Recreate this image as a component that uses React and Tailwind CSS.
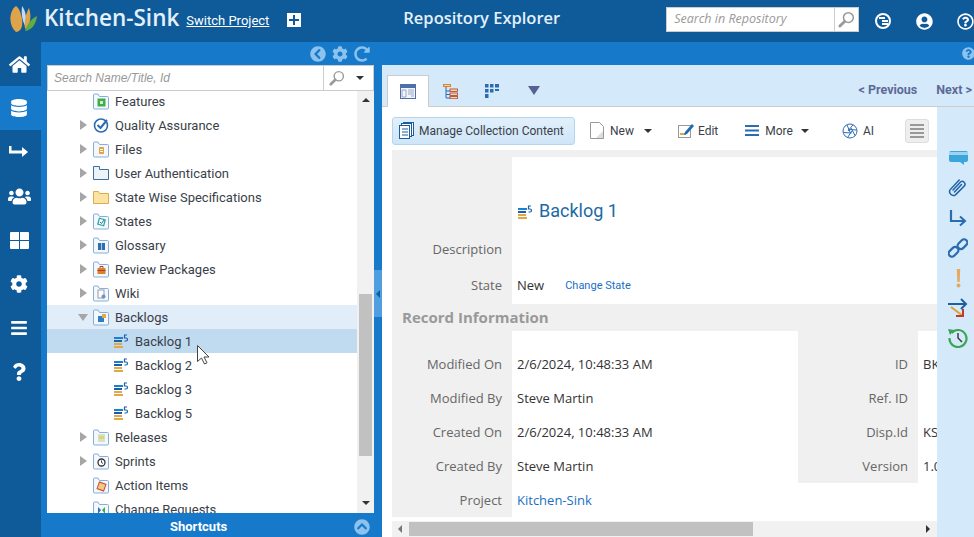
import React from 'react';
import { FaHome, FaDatabase, FaUsers, FaCog, FaBars, FaQuestion, FaChevronCircleLeft, FaRedoAlt, FaQuestionCircle, FaChevronCircleUp, FaUserCircle, FaRegQuestionCircle } from 'react-icons/fa';

const treeBefore = [
  { label: 'Features', noArrow: true, inner: <><rect x="4.5" y="5.5" width="8" height="8" fill="#3fae4a" /><rect x="7" y="8" width="3" height="3" fill="#cfeccf" /></> },
  { label: 'Quality Assurance', check: true },
  { label: 'Files', inner: <><rect x="6" y="6" width="5" height="7" rx="1" fill="#e2a33f" /><path d="M7 8.5h3M7 10.5h3" stroke="#fff" /></> },
  { label: 'User Authentication', plain: true },
  { label: 'State Wise Specifications', yellow: true },
  { label: 'States', inner: <><rect x="5.5" y="6" width="6" height="6" fill="#fff" stroke="#2aa7a0" strokeWidth="1.3" transform="rotate(15 8.5 9)" /><path d="M7 9l1.5 1.5L11 7" stroke="#2b6cb0" fill="none" /></> },
  { label: 'Glossary', inner: <><rect x="5" y="6" width="7" height="7" fill="#2f6fb0" /><path d="M8.5 6v7" stroke="#a9c7e6" /></> },
  { label: 'Review Packages', inner: <><rect x="4.5" y="7" width="8" height="6" fill="#d9822b" /><rect x="4.5" y="9" width="8" height="1" fill="#b03a2e" /><path d="M7 7V5.5h3V7" stroke="#b03a2e" fill="none" /></> },
  { label: 'Wiki', inner: <><rect x="5" y="5" width="6" height="8" fill="#fff" stroke="#99a" /><circle cx="10.5" cy="11.5" r="2" fill="#6c93c9" /></> },
];

const treeAfter = [
  { label: 'Releases', inner: <><rect x="5" y="5" width="7" height="8" fill="#cfe6c4" /><rect x="6" y="7" width="5" height="3" fill="#e7cf82" /></> },
  { label: 'Sprints', inner: <><circle cx="8.5" cy="9.5" r="3.5" fill="#fff" stroke="#333" strokeWidth="1.3" /><path d="M8.5 7.5v2l1.5 1" stroke="#333" fill="none" /></> },
  { label: 'Action Items', noArrow: true, inner: <rect x="5" y="6" width="7" height="7" fill="#f3c98b" stroke="#c9502a" transform="rotate(20 8.5 9.5)" /> },
  { label: 'Change Requests', noArrow: true, inner: <><path d="M5 6l3 3-3 4z" fill="#2f6fb0" /><path d="M12 6l-3 3 3 4z" fill="#3fae4a" /></> },
];

const backlogs = ['Backlog 1', 'Backlog 2', 'Backlog 3', 'Backlog 5'];

function FolderIcon({ children }) {
  return (
    <svg width="16" height="17" viewBox="0 0 16 17" className="shrink-0">
      <path d="M.5 15V2a1 1 0 0 1 1-1h3.5l1.5 2.5H14.500a1 1 0 0 1 1 1V15a1 1 0 0 1-1 1h-13a1 1 0 0 1-1-1z" fill="#f4f8fc" stroke="#86aedb" />
      {children}
    </svg>
  );
}

function BacklogIcon() {
  return (
    <svg width="15" height="14" viewBox="0 0 15 14" className="shrink-0">
      <rect x="0" y="3" width="9" height="2" fill="#1b7fd4" />
      <rect x="0" y="6" width="8" height="2" fill="#1b5fa8" />
      <rect x="0" y="9" width="8" height="2" fill="#e0a848" />
      <rect x="0" y="12" width="9" height="2" fill="#e0a848" />
      <path d="M10 1h3M10.500 1v3h1.500a1.400 1.400 0 0 1 0 3h-1.500" fill="none" stroke="#1b5fa8" strokeWidth="1.2" />
    </svg>
  );
}

function Arrow({ open }) {
  if (open) {
    return <svg width="10" height="7" viewBox="0 0 10 7" className="shrink-0"><path d="M0 0h10L5 7z" fill="#a6a6a6" /></svg>;
  }
  return <svg width="7" height="10" viewBox="0 0 7 10" className="shrink-0"><path d="M0 0l7 5-7 5z" fill="#a6a6a6" /></svg>;
}

function TreeRow({ item }) {
  return (
    <div className="flex h-6 items-center pl-[33px]">
      <div className="flex w-[13px] shrink-0">{!item.noArrow && <Arrow />}</div>
      {item.check ? (
        <svg width="16" height="16" viewBox="0 0 16 16" className="shrink-0">
          <circle cx="8" cy="8.500" r="6.500" fill="none" stroke="#2b6cb0" strokeWidth="1.6" />
          <path d="M4.500 8l3 3L14 3" fill="none" stroke="#2b6cb0" strokeWidth="2" />
        </svg>
      ) : item.plain ? (
        <svg width="16" height="14" viewBox="0 0 16 14" className="shrink-0">
          <path d="M.5 13.500v-13h6v3h9v10z" fill="#eef3f8" stroke="#3b6ea5" />
        </svg>
      ) : item.yellow ? (
        <svg width="16" height="13" viewBox="0 0 16 13" className="shrink-0">
          <path d="M.5 12.500v-12h5l1 2h9v10z" fill="#fbe3a4" stroke="#e0ab4f" />
        </svg>
      ) : (
        <FolderIcon>{item.inner}</FolderIcon>
      )}
      <span className="ml-[6px] pt-[2px] text-[13px] whitespace-nowrap text-[#3a3f4a]">{item.label}</span>
    </div>
  );
}

function SideIcon({ children, active }) {
  return (
    <div className={`flex h-11 items-center justify-center pr-[3px] text-white ${active ? 'bg-[#1679c9]' : ''}`}>
      {children}
    </div>
  );
}

function Magnifier({ size = 18, color = '#9a9a9a' }) {
  return (
    <svg width={size} height={size} viewBox="0 0 18 18">
      <circle cx="11" cy="7" r="5.200" fill="none" stroke={color} strokeWidth="1.6" />
      <path d="M7 11l-5 5" stroke={color} strokeWidth="3" strokeLinecap="round" />
    </svg>
  );
}

function Caret({ className = '' }) {
  return <svg width="8" height="4" viewBox="0 0 8 4" className={className}><path d="M0 0h8L4 4z" fill="#333" /></svg>;
}

function InfoRow({ label, value, label2, value2, link }) {
  return (
    <div className="flex h-[34px] items-center">
      <div className="flex h-full w-[120px] shrink-0 items-center justify-end pt-[1px] pr-[10px] text-[#666]">{label}</div>
      <div className={`flex h-full w-[286px] shrink-0 items-center bg-white pt-[1px] pl-[5px] ${link ? 'text-[#1a6fc4]' : 'text-[#333]'}`}>{value}</div>
      <div className={`flex h-full w-[120px] shrink-0 items-center justify-end pt-[1px] pr-[10px] text-[#666] ${link ? 'bg-white' : ''}`}>{label2}</div>
      <div className="flex h-full flex-1 items-center overflow-hidden bg-white pt-[1px] pl-[5px] whitespace-nowrap text-[#333]">{value2}</div>
    </div>
  );
}

export default function App() {
  return (
    <div className="relative flex h-[537px] w-[974px] flex-col overflow-hidden bg-white font-['Roboto',sans-serif]">
      {/* Header */}
      <div className="flex h-[42px] shrink-0 items-center bg-[#0f5a99]">
        <svg width="30" height="28" viewBox="0 0 30 28" className="mb-[4px] ml-[9px] shrink-0">
          <path d="M7 1C0 6-1 20 7 27c5-1 7-5 6-13C12 8 10 3 7 1z" fill="#dfa44a" />
          <path d="M13 1c-1 7 0 14 3 20 2-7 1-15-3-20z" fill="#c5daf0" />
          <path d="M20 3c-3 5-5 13-4 21 5-3 7-12 4-21z" fill="#dfa44a" />
          <path d="M28 11c-5 2-10 8-12 15 7-1 11-7 12-15z" fill="#62ab45" />
        </svg>
        <span className="mb-[6px] ml-[5px] font-['Open_Sans',sans-serif] text-[22.5px] leading-none font-semibold whitespace-nowrap text-[#e4f0fa]">Kitchen-Sink</span>
        <span className="ml-[7px] text-[13px] whitespace-nowrap text-white underline">Switch Project</span>
        <div className="mb-[2px] ml-[18px] flex h-[14px] w-[14px] items-center justify-center bg-white">
          <svg width="10" height="10" viewBox="0 0 10 10"><path d="M4 0h2v4h4v2H6v4H4V6H0V4h4z" fill="#0f5a99" /></svg>
        </div>
        <span className="mb-[6px] ml-[102px] font-['Open_Sans',sans-serif] text-[16.5px] font-semibold whitespace-nowrap text-[#e4f0fa]">Repository Explorer</span>
        <div className="mb-[3px] ml-[106px] flex h-[25px] w-[194px] border border-[#ccc] bg-white">
          <span className="flex flex-1 items-center pl-[7px] font-['Open_Sans',sans-serif] text-[12.5px] text-[#999] italic">Search in Repository</span>
          <div className="flex w-[24px] items-center justify-center border-l border-[#ccc]"><Magnifier size={17} /></div>
        </div>
        <div className="ml-[16px] flex h-[16px] w-[16px] items-center justify-center rounded-full border-2 border-white">
          <svg width="9" height="8" viewBox="0 0 9 8"><path d="M0 0h6v2H0zM3 3h6v2H3zM3 6h6v2H3z" fill="#fff" /></svg>
        </div>
        <FaUserCircle className="ml-[25px] text-[17px] text-white" />
        <FaRegQuestionCircle className="ml-[24px] text-[17px] text-white" />
      </div>

      <div className="flex min-h-0 flex-1">
        {/* Side nav */}
        <div className="w-[41px] shrink-0 bg-[#0f5a99]">
          <SideIcon><FaHome className="text-[21px]" /></SideIcon>
          <SideIcon active><FaDatabase className="text-[18px]" /></SideIcon>
          <SideIcon>
            <svg width="20" height="14" viewBox="0 0 20 14"><path d="M1 1v6h13" fill="none" stroke="#fff" strokeWidth="3" /><path d="M13 2l6 5-6 5z" fill="#fff" /></svg>
          </SideIcon>
          <SideIcon><FaUsers className="text-[23px]" /></SideIcon>
          <SideIcon>
            <svg width="19" height="17" viewBox="0 0 19 17"><path d="M0 1a1 1 0 0 1 1-1h8v8H0zM10 0h8a1 1 0 0 1 1 1v7h-9zM0 9h9v8H1a1 1 0 0 1-1-1zM10 9h9v7a1 1 0 0 1-1 1h-8z" fill="#fff" /></svg>
          </SideIcon>
          <SideIcon><FaCog className="text-[18px]" /></SideIcon>
          <SideIcon><FaBars className="text-[18px]" /></SideIcon>
          <SideIcon><FaQuestion className="text-[18px]" /></SideIcon>
        </div>

        {/* Left panel */}
        <div className="flex w-[341px] shrink-0 flex-col bg-[#1679c9]">
          <div className="flex h-[23px] shrink-0 items-center justify-end gap-[6px] pr-[12px] text-[16px] text-[#8cc2ee]">
            <FaChevronCircleLeft />
            <FaCog />
            <FaRedoAlt />
          </div>
          <div className="flex min-h-0 flex-1">
            <div className="ml-[6px] flex w-[327px] shrink-0 flex-col bg-white">
              <div className="flex h-[26px] shrink-0 items-center border border-[#ccc] bg-white">
                <span className="flex-1 pl-[6px] font-['Liberation_Sans',sans-serif] text-[12px] text-[#999] italic">Search Name/Title, Id</span>
                <div className="flex h-full w-[50px] items-center gap-[11px] border-l border-[#ccc] pl-[5px]">
                  <Magnifier size={16} />
                  <Caret />
                </div>
              </div>
              <div className="flex min-h-0 flex-1">
                <div className="min-w-0 flex-1 overflow-hidden">
                  <div className="-mt-[2px]">
                    {treeBefore.map((item) => <TreeRow key={item.label} item={item} />)}
                    <div className="flex h-6 items-center bg-[#e1edf8] pl-[31px]">
                      <div className="flex w-[15px] shrink-0"><Arrow open /></div>
                      <FolderIcon>
                        <rect x="5" y="7" width="6" height="6" fill="#2b7fc4" />
                        <rect x="9" y="5" width="4" height="4" fill="#e0a848" />
                      </FolderIcon>
                      <span className="ml-[6px] pt-[2px] text-[13px] text-[#3a3f4a]">Backlogs</span>
                    </div>
                    {backlogs.map((name, i) => (
                      <div key={name} className={`flex h-6 items-center pl-[67px] ${i === 0 ? 'bg-[#c0daf0]' : ''}`}>
                        <BacklogIcon />
                        <span className="ml-[6px] pt-[2px] text-[13px] text-[#3a3f4a]">{name}</span>
                      </div>
                    ))}
                    {treeAfter.map((item) => <TreeRow key={item.label} item={item} />)}
                  </div>
                </div>
                <div className="flex w-[17px] shrink-0 flex-col items-center bg-[#f1f1f1]">
                  <svg width="8" height="4" viewBox="0 0 8 4" className="mt-[7px] shrink-0"><path d="M0 4h8L4 0z" fill="#333" /></svg>
                  <div className="mt-[192px] h-[162px] w-[13px] shrink-0 bg-[#c1c1c1]" />
                  <Caret className="mt-[45px] shrink-0" />
                </div>
              </div>
            </div>
            <div className="w-[8px] shrink-0">
              <div className="mt-[205px] flex h-[47px] items-center justify-center bg-[#4e9ee0]">
                <svg width="4" height="8" viewBox="0 0 4 8"><path d="M4 0v8L0 4z" fill="#0f5a99" /></svg>
              </div>
            </div>
          </div>
          <div className="flex h-[24px] shrink-0 items-center pt-[3px] text-white">
            <span className="ml-[129px] text-[13px] font-bold">Shortcuts</span>
            <FaChevronCircleUp className="ml-[127px] text-[16px] text-[#8cc2ee]" />
          </div>
        </div>

        {/* Main area */}
        <div className="flex min-w-0 flex-1 flex-col">
          <div className="flex h-[23px] shrink-0 items-center justify-end bg-[#1679c9]">
            <FaQuestionCircle className="translate-x-[1px] text-[13px] text-[#8cc2ee]" />
          </div>

          {/* Tabs */}
          <div className="flex h-[42px] shrink-0 border-b border-[#ccc] bg-[#d4e9f9]">
            <div className="mt-[10px] ml-[5px] flex h-[32px] w-[42px] items-center justify-center border border-b-0 border-[#ccc] bg-white">
              <svg width="16" height="15" viewBox="0 0 16 15">
                <rect x=".5" y=".5" width="15" height="14" fill="#f2f5fa" stroke="#4f6fa8" />
                <rect x="1" y="1" width="14" height="3" fill="#4f6fa8" />
                <path d="M2 6h4v7H2zM8 6h6M8 8h6M8 10h6M11 12h3" stroke="#9aa9c7" fill="none" />
              </svg>
            </div>
            <div className="mt-[19px] ml-[14px] h-[15px]">
              <svg width="15" height="15" viewBox="0 0 15 15">
                <rect x=".5" y=".5" width="7" height="2" fill="#f6d9a6" stroke="#d9822b" />
                <path d="M3 3v11h4M3 7h4M3 10.500h4" stroke="#2b6cb0" fill="none" />
                <rect x="7" y="5" width="7.500" height="2.400" fill="#f6d9a6" stroke="#b03a2e" strokeWidth=".8" />
                <rect x="7" y="9" width="7.500" height="2.400" fill="#f6d9a6" stroke="#b03a2e" strokeWidth=".8" />
                <rect x="7" y="12.400" width="7.500" height="2.400" fill="#f6d9a6" stroke="#b03a2e" strokeWidth=".8" />
              </svg>
            </div>
            <div className="mt-[19px] ml-[27px] h-[15px]">
              <svg width="14" height="15" viewBox="0 0 14 15" fill="#2b6cb0">
                <path d="M0 0h3.500v3.500H0zM5 0h3.500v3.500H5zM10 0h4v3.500h-4zM0 5h3.500v3.500H0zM5 5h3.500v3.500H5zM10 5h4v2h-4zM0 10h3.500v4H0z" />
              </svg>
            </div>
            <div className="mt-[21px] ml-[29px]">
              <svg width="12" height="9" viewBox="0 0 12 9"><path d="M0 0h12L6 9z" fill="#56618f" /></svg>
            </div>
            <div className="ml-auto flex h-[41px] items-center gap-[19px] pt-[9px] text-[12.5px] font-bold whitespace-nowrap text-[#5d6a99]">
              <span>&lt; Previous</span>
              <span className="mr-[2px]">Next &gt;</span>
            </div>
          </div>

          <div className="flex min-h-0 flex-1">
            <div className="flex w-[555px] shrink-0 flex-col bg-white pl-[10px]">
              {/* Toolbar */}
              <div className="flex h-[43px] shrink-0 items-center pt-[5px] pb-[1px] text-[12px] text-[#3a3f4a]">
                <div className="flex h-[28px] w-[183px] items-center rounded-[3px] border border-[#b5d5ef] bg-gradient-to-b from-[#e2f0fb] to-[#cfe5f7] pl-[6px]">
                  <svg width="15" height="17" viewBox="0 0 15 17" fill="none" stroke="#1b5f9e">
                    <rect x="4.500" y=".5" width="10" height="13" fill="#fff" />
                    <rect x="2.500" y="1.500" width="10" height="13" fill="#fff" />
                    <rect x=".5" y="3.500" width="10" height="13" fill="#fff" />
                    <path d="M3 7h6M3 10h6M3 13h6" />
                  </svg>
                  <span className="ml-[5px] whitespace-nowrap">Manage Collection Content</span>
                </div>
                <svg width="14" height="17" viewBox="0 0 14 17" className="ml-[15px]">
                  <path d="M.5.5h9l4 4v12H.5z" fill="#fff" stroke="#999" />
                  <path d="M6 16l7-7v7z" fill="#ddd" />
                </svg>
                <span className="ml-[6px]">New</span>
                <Caret className="ml-[10px]" />
                <svg width="16" height="15" viewBox="0 0 16 15" className="ml-[26px]">
                  <rect x=".5" y="2.500" width="12" height="12" fill="#fff" stroke="#999" />
                  <path d="M2 11h6" stroke="#e0a848" strokeWidth="2" />
                  <path d="M7 9l7-8 2 2-7 8-3 1z" fill="#1b6cb5" />
                </svg>
                <span className="ml-[4px]">Edit</span>
                <svg width="14" height="11" viewBox="0 0 14 11" className="ml-[27px]" fill="#2b6cb0">
                  <path d="M0 0h14v2H0zM0 4.500h14v2H0zM0 9h14v2H0z" />
                </svg>
                <span className="ml-[6px]">More</span>
                <Caret className="ml-[8px]" />
                <svg width="16" height="16" viewBox="0 0 16 16" className="ml-[33px]" fill="none" stroke="#2b6cb0">
                  <circle cx="8" cy="8" r="7" />
                  <path d="M5 2l3.500 8M11 1.800L6 8M14.500 7l-8-.5M13 12.500L9 5M5.500 14.500L10 8M1.500 9.500l8 .5" />
                </svg>
                <span className="ml-[5px]">AI</span>
                <div className="ml-[31px] flex h-[24px] w-[24px] flex-col items-center justify-center gap-[2px] rounded-[3px] border border-[#ddd] bg-[#eee]">
                  <div className="h-[2px] w-[14px] bg-[#999]" />
                  <div className="h-[2px] w-[14px] bg-[#999]" />
                  <div className="h-[2px] w-[14px] bg-[#999]" />
                  <div className="h-[2px] w-[14px] bg-[#999]" />
                </div>
              </div>

              {/* Record form */}
              <div className="flex flex-col overflow-hidden bg-[#f0f0f0] pt-[7px] font-['Open_Sans',sans-serif] text-[13px]">
                <div className="flex h-[75px]">
                  <div className="w-[120px] shrink-0" />
                  <div className="flex flex-1 items-end gap-[6px] bg-white pb-[8px] pl-[6px]">
                    <div className="mb-[5px]"><BacklogIcon /></div>
                    <span className="font-['Roboto',sans-serif] text-[18px] text-[#1c6aa5]">Backlog 1</span>
                  </div>
                </div>
                <div className="flex h-[34px]">
                  <div className="flex w-[120px] shrink-0 items-center justify-end pt-[1px] pr-[10px] text-[#666]">Description</div>
                  <div className="flex-1 bg-white" />
                </div>
                <div className="flex h-[38px]">
                  <div className="flex w-[120px] shrink-0 items-center justify-end pt-[2px] pr-[10px] text-[#666]">State</div>
                  <div className="flex flex-1 items-center bg-white pt-[2px] pl-[5px] text-[#333]">
                    New
                    <span className="ml-[21px] font-['Roboto',sans-serif] text-[11px] text-[#1a6fc4]">Change State</span>
                  </div>
                </div>
                <div className="flex h-[27px] items-center pl-[10px] text-[15px] font-bold text-[#999]">Record Information</div>
                <div className="flex h-[16px]">
                  <div className="w-[120px] shrink-0" />
                  <div className="w-[286px] shrink-0 bg-white" />
                  <div className="w-[120px] shrink-0" />
                  <div className="flex-1 bg-white" />
                </div>
                <InfoRow label="Modified On" value="2/6/2024, 10:48:33 AM" label2="ID" value2="BK" />
                <InfoRow label="Modified By" value="Steve Martin" label2="Ref. ID" />
                <InfoRow label="Created On" value="2/6/2024, 10:48:33 AM" label2="Disp.Id" value2="KS" />
                <InfoRow label="Created By" value="Steve Martin" label2="Version" value2="1.0" />
                <InfoRow label="Project" value="Kitchen-Sink" link />
              </div>

              {/* Horizontal scrollbar */}
              <div className="mt-[4px] flex h-[16px] shrink-0 items-center bg-[#f1f1f1]">
                <svg width="4" height="8" viewBox="0 0 4 8" className="ml-[6px] shrink-0"><path d="M4 0v8L0 4z" fill="#777" /></svg>
                <div className="ml-[7px] h-[14px] w-[344px] shrink-0 bg-[#c1c1c1]" />
                <svg width="4" height="8" viewBox="0 0 4 8" className="ml-[173px] shrink-0"><path d="M0 0v8l4-4z" fill="#333" /></svg>
              </div>
            </div>

            {/* Right rail */}
            <div className="flex w-[37px] shrink-0 flex-col items-center bg-[#d4e9f9] pt-[36px] pl-[5px]">
              <div className="flex h-[30px] items-center justify-center">
                <svg width="19" height="15" viewBox="0 0 19 15"><path d="M2 0h15a2 2 0 0 1 2 2v7a2 2 0 0 1-2 2h-2v3l-4-3H2a2 2 0 0 1-2-2V2a2 2 0 0 1 2-2z" fill="#3aa6dc" /><rect x="0" y="1" width="19" height="3" fill="#9fd3ee" /></svg>
              </div>
              <div className="flex h-[30px] items-center justify-center">
                <svg width="20" height="20" viewBox="0 0 20 20" fill="none" stroke="#1f62a8" strokeWidth="1.5" strokeLinecap="round">
                  <path d="M5 12.500l7.500-8a2.800 2.800 0 0 1 4 3.800L7.500 17.300a3.800 3.800 0 0 1-5.300-5.200l9-9.500" transform="translate(0 -.5)" />
                  <path d="M6.500 14l7-7.500" />
                </svg>
              </div>
              <div className="flex h-[30px] items-center justify-center">
                <svg width="18" height="18" viewBox="0 0 18 18"><path d="M2 1v11h13" fill="none" stroke="#2b6cb0" strokeWidth="2.2" /><path d="M11 7.500l5 4.500-5 4.500" fill="none" stroke="#2b6cb0" strokeWidth="2" /></svg>
              </div>
              <div className="flex h-[30px] items-center justify-center">
                <svg width="20" height="20" viewBox="0 0 20 20" fill="none" stroke="#2b6cb0" strokeWidth="2.200">
                  <rect x="9" y="1.500" width="11" height="6.500" rx="3.200" transform="rotate(-45 14.500 4.800) translate(-1 1)" />
                  <rect x="0" y="12" width="11" height="6.500" rx="3.200" transform="rotate(-45 5.500 15.200) translate(1 -1)" />
                </svg>
              </div>
              <div className="flex h-[30px] items-center justify-center">
                <svg width="5" height="19" viewBox="0 0 5 19"><path d="M.8 0h3.400l-.5 13H1.300z" fill="#e6a95c" /><circle cx="2.500" cy="16.500" r="2" fill="#e6a95c" /></svg>
              </div>
              <div className="flex h-[30px] items-center justify-center">
                <svg width="20" height="20" viewBox="0 0 20 20" fill="none">
                  <path d="M3 9l12 9" stroke="#e0a030" strokeWidth="2" />
                  <path d="M15 11v7H8" stroke="#c0392b" strokeWidth="2" />
                  <path d="M0 6h18M13 1l5 5-5 5" stroke="#1f5f9e" strokeWidth="2" />
                </svg>
              </div>
              <div className="flex h-[30px] items-center justify-center">
                <svg width="20" height="20" viewBox="0 0 20 20" fill="none">
                  <path d="M3.500 5A8.500 8.500 0 1 1 1.500 10" stroke="#3aa655" strokeWidth="2.200" />
                  <path d="M0 1l6 1-4 5z" fill="#3aa655" />
                  <path d="M10 5v5l4 4" stroke="#333" strokeWidth="1.400" />
                </svg>
              </div>
            </div>
          </div>
        </div>
      </div>

      {/* Mouse cursor */}
      <svg width="13" height="20" viewBox="0 0 13 20" className="absolute top-[345px] left-[197px]">
        <path d="M.5.5v16l4-3.500 3 6 2.500-1.200-3-5.800h5z" fill="#fff" stroke="#444" />
      </svg>
    </div>
  );
}
